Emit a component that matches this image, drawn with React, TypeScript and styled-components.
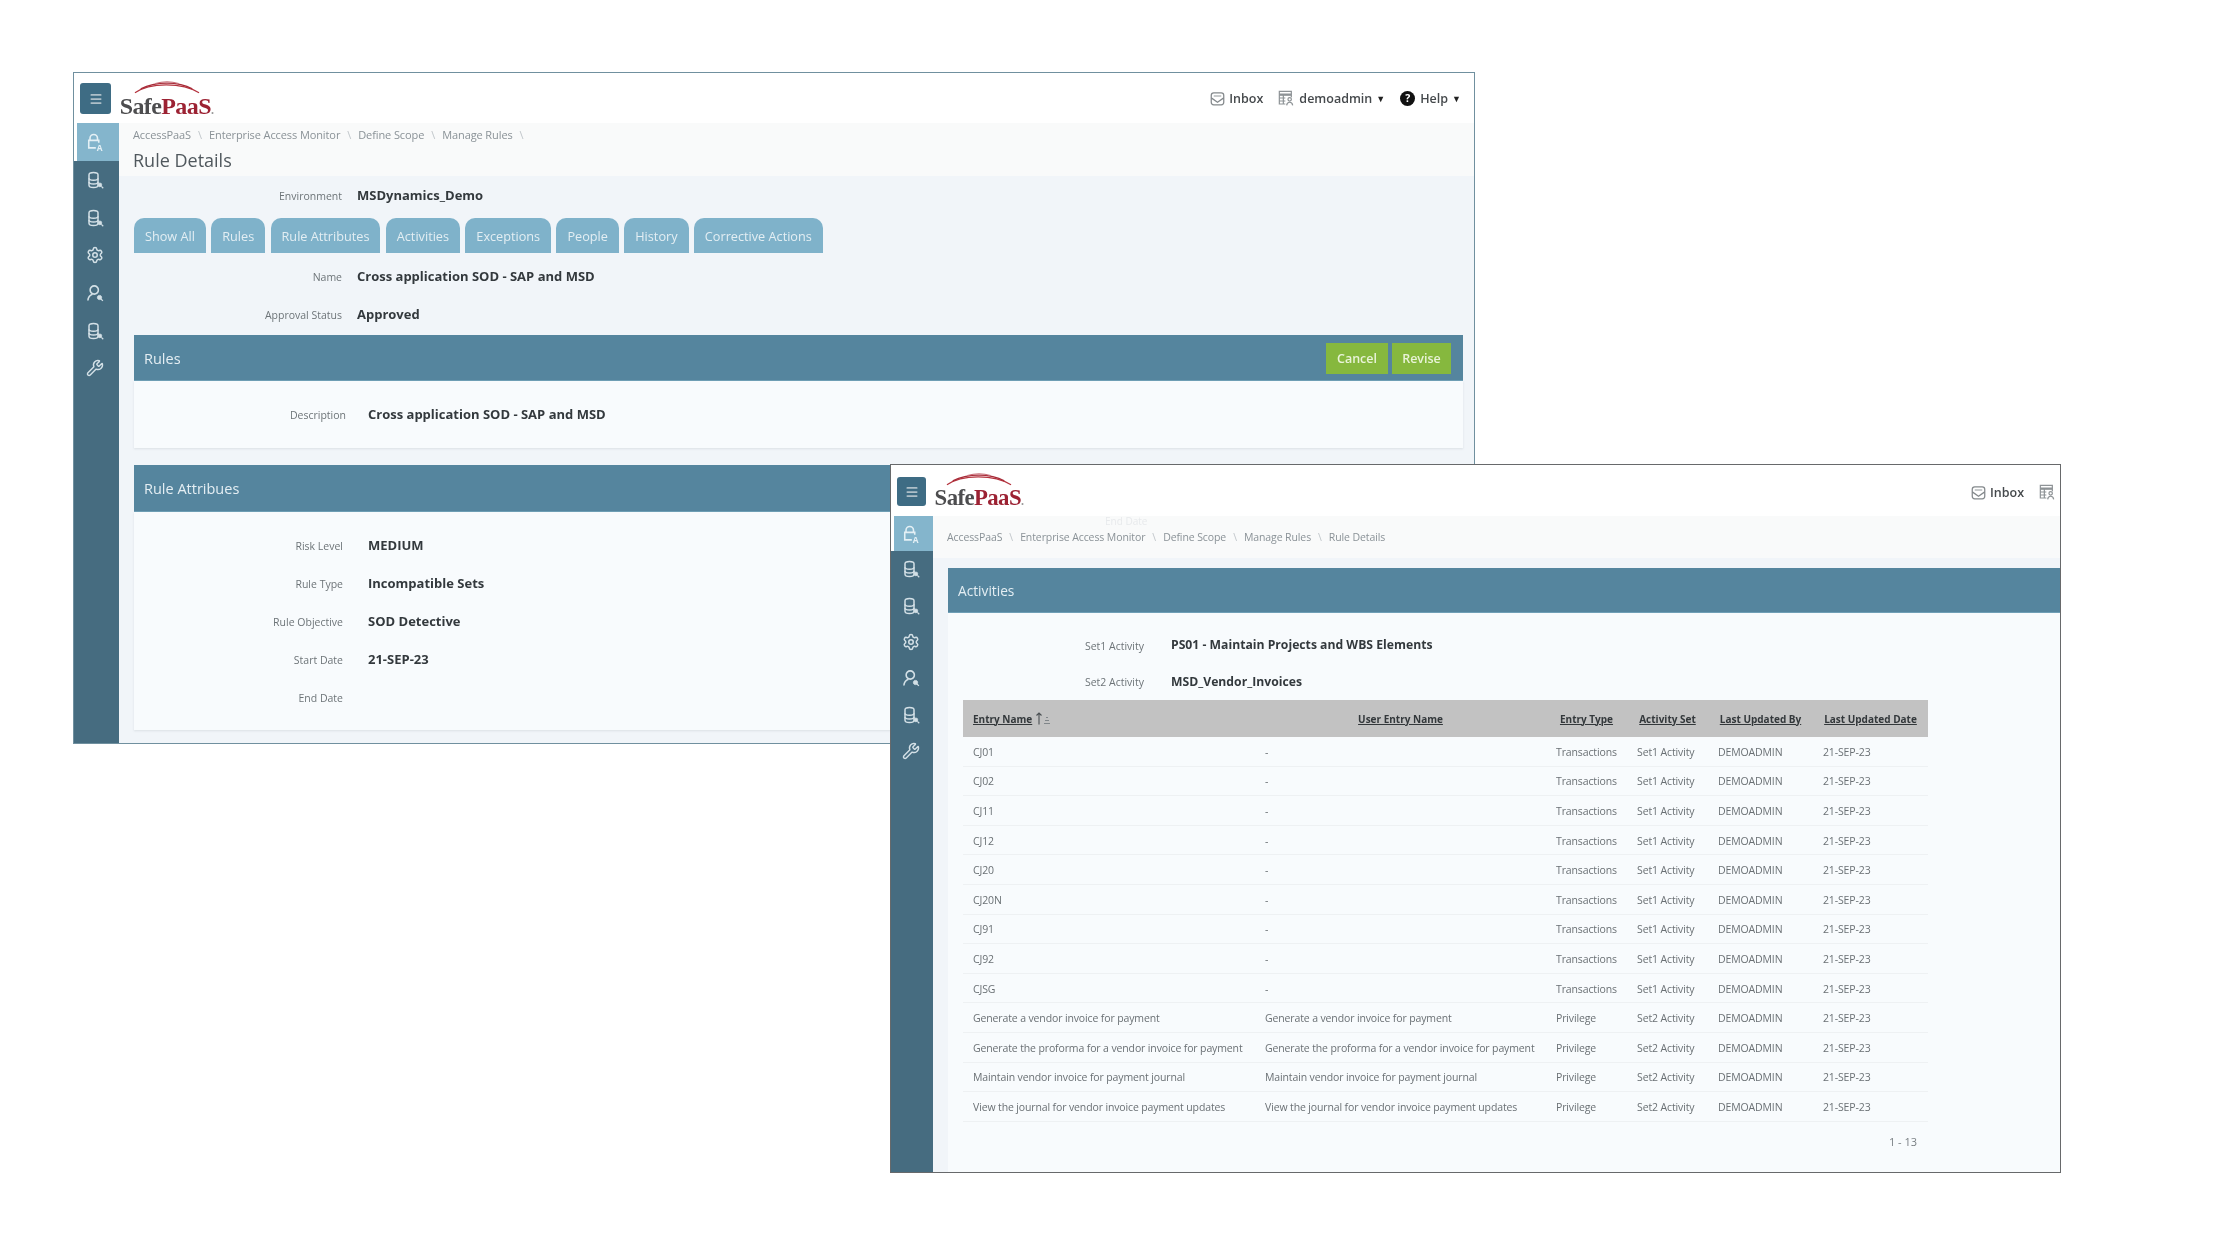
import React from 'react';
import styled, { createGlobalStyle } from 'styled-components';
import { Menu as MenuIcon, Settings, Wrench } from 'lucide-react';

const GlobalStyle = createGlobalStyle`
  html, body {
    margin: 0;
    background: #ffffff;
    font-family: 'Open Sans', 'Liberation Sans', sans-serif;
  }
`;

const tabs = ['Show All', 'Rules', 'Rule Attributes', 'Activities', 'Exceptions', 'People', 'History', 'Corrective Actions'];
const attributes = [
  ['Risk Level', 'MEDIUM'],
  ['Rule Type', 'Incompatible Sets'],
  ['Rule Objective', 'SOD Detective'],
  ['Start Date', '21-SEP-23'],
  ['End Date', ''],
];
const entries = [
  ['CJ01', '-', 'Transactions', 'Set1 Activity'],
  ['CJ02', '-', 'Transactions', 'Set1 Activity'],
  ['CJ11', '-', 'Transactions', 'Set1 Activity'],
  ['CJ12', '-', 'Transactions', 'Set1 Activity'],
  ['CJ20', '-', 'Transactions', 'Set1 Activity'],
  ['CJ20N', '-', 'Transactions', 'Set1 Activity'],
  ['CJ91', '-', 'Transactions', 'Set1 Activity'],
  ['CJ92', '-', 'Transactions', 'Set1 Activity'],
  ['CJSG', '-', 'Transactions', 'Set1 Activity'],
  ['Generate a vendor invoice for payment', 'Generate a vendor invoice for payment', 'Privilege', 'Set2 Activity'],
  ['Generate the proforma for a vendor invoice for payment', 'Generate the proforma for a vendor invoice for payment', 'Privilege', 'Set2 Activity'],
  ['Maintain vendor invoice for payment journal', 'Maintain vendor invoice for payment journal', 'Privilege', 'Set2 Activity'],
  ['View the journal for vendor invoice payment updates', 'View the journal for vendor invoice payment updates', 'Privilege', 'Set2 Activity'],
];

function DbSearchIcon() {
  return (
    <svg width="18" height="18" viewBox="0 0 24 24" fill="none" stroke="currentColor" strokeWidth="2">
      <path d="M4 5c0-1.700 2.500-3 6-3s6 1.300 6 3v14c0 1.700-2.500 3-6 3s-6-1.300-6-3z" />
      <path d="M4 9.500c0 1.500 2.500 2.700 6 2.700s6-1.200 6-2.700M4 14.500c0 1.500 2.500 2.700 6 2.700s6-1.200 6-2.700" />
      <circle cx="18.500" cy="18.500" r="2.500" fill="currentColor" strokeWidth="1" />
      <path d="M20.500 20.500l2.500 2.500" strokeWidth="1.600" />
    </svg>
  );
}

function LockAIcon() {
  return (
    <svg width="20" height="20" viewBox="0 0 24 24" fill="none" stroke="currentColor" strokeWidth="1.900">
      <path d="M6 10V7.500a4.500 4.500 0 0 1 9 0V10" />
      <path d="M13 19H4.500V10h12v3" />
      <text x="14" y="23" fontSize="10" fontWeight="700" fill="currentColor" stroke="none" fontFamily="Open Sans">A</text>
    </svg>
  );
}

function UserSearchIcon() {
  return (
    <svg width="18" height="18" viewBox="0 0 24 24" fill="none" stroke="currentColor" strokeWidth="2.100">
      <circle cx="11" cy="8" r="5.500" />
      <path d="M2.500 22c.4-4.400 2.900-7.400 6.200-8.400" />
      <circle cx="18" cy="18" r="2.800" fill="currentColor" strokeWidth="1.200" />
      <path d="M20 20l2.500 2.500" strokeWidth="1.600" />
    </svg>
  );
}

function InboxIcon() {
  return (
    <svg width="15" height="15" viewBox="0 0 24 24" fill="none" stroke="#84898c" strokeWidth="2">
      <rect x="2" y="3" width="20" height="19" rx="4" />
      <path d="M2 11l10 7 10-7" />
      <path d="M6 8h12" strokeWidth="1.400" />
    </svg>
  );
}

function TableUserIcon() {
  return (
    <svg width="16" height="16" viewBox="0 0 24 24" fill="none" stroke="#8e9396" strokeWidth="1.800">
      <path d="M11 21H2V2h18v9" />
      <path d="M2 7h18" strokeWidth="3.500" />
      <path d="M2 12h9M2 16.500h9M8 7v14" />
      <circle cx="17.500" cy="14" r="2.600" />
      <path d="M13 23c.3-3 2-4.600 4.500-4.600S21.700 20 22 23" />
    </svg>
  );
}

function SortIcon() {
  return (
    <svg width="16" height="13" viewBox="0 0 16 13" fill="none" stroke="#4a4f52" strokeWidth="1.100">
      <path d="M4 12.500V1M1.500 3.500L4 1l2.500 2.500" />
      <path d="M9 11.500h6M10 8.500h4M11 5.500h2" stroke="#80868a" />
    </svg>
  );
}

function Logo({ $width, $size }: { $width: number; $size: number }) {
  return (
    <LogoBox $width={$width}>
      <svg width="66" height="14" viewBox="0 0 68 14" fill="none" stroke="#b5343f">
        <path d="M1 13C16 2 50 2 67 13" strokeWidth="1.200" />
        <path d="M7 9C22 1 46 1 60 9" strokeWidth="1.500" stroke="#a72b38" />
        <path d="M22 3.500C30 1 38 1 46 3.500" strokeWidth="1.100" stroke="#c9707a" />
      </svg>
      <LogoText $size={$size}>
        Safe<LogoRed>PaaS</LogoRed><LogoDot>.</LogoDot>
      </LogoText>
    </LogoBox>
  );
}

function UserMenu({ $offset }: { $offset?: number }) {
  return (
    <Menu $offset={$offset}>
      <MenuItem $gap={4}>
        <InboxIcon />
        Inbox
      </MenuItem>
      <MenuItem $gap={5}>
        <TableUserIcon />
        demoadmin
        <Caret>▼</Caret>
      </MenuItem>
      <MenuItem $gap={5}>
        <HelpDot>?</HelpDot>
        Help
        <Caret>▼</Caret>
      </MenuItem>
    </Menu>
  );
}

function SideNav({ $width, $first, $item }: { $width: number; $first: number; $item: number }) {
  return (
    <Sidebar $width={$width}>
      <ActiveItem $height={$first}>
        <LockAIcon />
      </ActiveItem>
      <NavItem $height={$item}><DbSearchIcon /></NavItem>
      <NavItem $height={$item}><DbSearchIcon /></NavItem>
      <NavItem $height={$item}><Settings size={18} strokeWidth={2} /></NavItem>
      <NavItem $height={$item}><UserSearchIcon /></NavItem>
      <NavItem $height={$item}><DbSearchIcon /></NavItem>
      <NavItem $height={$item}><Wrench size={18} strokeWidth={1.900} /></NavItem>
    </Sidebar>
  );
}

export default function App(): React.ReactElement {
  return (
    <>
      <GlobalStyle />
      <Canvas>
        <Window $x={73} $y={72} $w={1402} $h={672} $border="#70909f">
          <Header $height={50}>
            <Hamburger $size={31} $top={3}><MenuIcon size={14} color="#aebfc8" strokeWidth={3} /></Hamburger>
            <Logo $width={93} $size={24} />
            <UserMenu />
          </Header>
          <Body>
            <SideNav $width={45} $first={38} $item={37.700} />
            <Main>
              <TitleBand $height={53} $top={3}>
                <Crumbs $size={11}>
                  <span>AccessPaaS</span><Sep>\</Sep>
                  <span>Enterprise Access Monitor</span><Sep>\</Sep>
                  <span>Define Scope</span><Sep>\</Sep>
                  <span>Manage Rules</span><Sep>\</Sep>
                </Crumbs>
                <PageTitle>Rule Details</PageTitle>
              </TitleBand>
              <Content>
                <FieldRow $height={40}>
                  <FieldLabel $width={208}>Environment</FieldLabel>
                  <FieldValue $gap={15} $size={13}>MSDynamics_Demo</FieldValue>
                </FieldRow>
                <TabBar>
                  {tabs.map((tab) => <Tab key={tab}>{tab}</Tab>)}
                </TabBar>
                <FieldRow $height={38} $top={5}>
                  <FieldLabel $width={208}>Name</FieldLabel>
                  <FieldValue $gap={15} $size={13}>Cross application SOD - SAP and MSD</FieldValue>
                </FieldRow>
                <FieldRow $height={38}>
                  <FieldLabel $width={208}>Approval Status</FieldLabel>
                  <FieldValue $gap={15} $size={13}>Approved</FieldValue>
                </FieldRow>
                <SectionBar $height={46} $top={1} $size={14.500}>
                  Rules
                  <BarActions>
                    <GreenButton $width={62}>Cancel</GreenButton>
                    <GreenButton $width={59}>Revise</GreenButton>
                  </BarActions>
                </SectionBar>
                <Card>
                  <FieldRow $height={38}>
                    <FieldLabel $width={212}>Description</FieldLabel>
                    <FieldValue $gap={22} $size={13}>Cross application SOD - SAP and MSD</FieldValue>
                  </FieldRow>
                </Card>
                <SectionBar $height={47} $top={17} $size={14.500}>Rule Attribues</SectionBar>
                <Card $bottom={13}>
                  {attributes.map(([label, value]) => (
                    <FieldRow key={label} $height={38}>
                      <FieldLabel $width={209}>{label}</FieldLabel>
                      <FieldValue $gap={25} $size={13}>{value}</FieldValue>
                    </FieldRow>
                  ))}
                </Card>
              </Content>
            </Main>
          </Body>
        </Window>

        <Window $x={890} $y={464} $w={1171} $h={709} $border="#67696b">
          <Header $height={51}>
            <Hamburger $size={29} $top={5}><MenuIcon size={14} color="#aebfc8" strokeWidth={3} /></Hamburger>
            <Logo $width={88} $size={22.800} />
            <UserMenu $offset={948} />
          </Header>
          <Body>
            <SideNav $width={42} $first={35} $item={36.400} />
            <Main>
              <TitleBand $height={42} $top={13}>
                <Crumbs $size={10.500}>
                  <span>AccessPaaS</span><Sep>\</Sep>
                  <span>Enterprise Access Monitor</span><Sep>\</Sep>
                  <span>Define Scope</span><Sep>\</Sep>
                  <span>Manage Rules</span><Sep>\</Sep>
                  <span>Rule Details</span>
                </Crumbs>
                <GhostLabel>End Date</GhostLabel>
              </TitleBand>
              <ActivitiesContent>
                <SectionBar $height={45} $top={10} $size={13.700}>Activities</SectionBar>
                <ActivitiesCard>
                  <FieldRow $height={37}>
                    <FieldLabel $width={196}>Set1 Activity</FieldLabel>
                    <FieldValue $gap={27} $size={12.200}>PS01 - Maintain Projects and WBS Elements</FieldValue>
                  </FieldRow>
                  <FieldRow $height={36}>
                    <FieldLabel $width={196}>Set2 Activity</FieldLabel>
                    <FieldValue $gap={27} $size={12.200}>MSD_Vendor_Invoices</FieldValue>
                  </FieldRow>
                  <EntryTable>
                    <HeadRow>
                      <HeadCell $align="left">
                        <HeadText>Entry Name</HeadText>
                        <SortIcon />
                      </HeadCell>
                      <HeadCell><HeadText>User Entry Name</HeadText></HeadCell>
                      <HeadCell><HeadText>Entry Type</HeadText></HeadCell>
                      <HeadCell><HeadText>Activity Set</HeadText></HeadCell>
                      <HeadCell><HeadText>Last Updated By</HeadText></HeadCell>
                      <HeadCell><HeadText>Last Updated Date</HeadText></HeadCell>
                    </HeadRow>
                    {entries.map(([name, user, type, set]) => (
                      <EntryRow key={name}>
                        <EntryCell>{name}</EntryCell>
                        <EntryCell>{user}</EntryCell>
                        <EntryCell>{type}</EntryCell>
                        <EntryCell>{set}</EntryCell>
                        <EntryCell>DEMOADMIN</EntryCell>
                        <EntryCell>21-SEP-23</EntryCell>
                      </EntryRow>
                    ))}
                    <Pager>1 - 13</Pager>
                  </EntryTable>
                </ActivitiesCard>
              </ActivitiesContent>
            </Main>
          </Body>
        </Window>
      </Canvas>
    </>
  );
}

const Canvas = styled.div`
  position: relative;
  width: 2240px;
  height: 1260px;
  overflow: hidden;
  background: #ffffff;
`;

const Window = styled.div<{ $x: number; $y: number; $w: number; $h: number; $border: string }>`
  position: absolute;
  left: ${(p) => p.$x}px;
  top: ${(p) => p.$y}px;
  width: ${(p) => p.$w}px;
  height: ${(p) => p.$h}px;
  box-sizing: border-box;
  display: flex;
  flex-direction: column;
  overflow: hidden;
  background: #ffffff;
  border: 1px solid ${(p) => p.$border};
  filter: blur(0.5px);
`;

const Header = styled.div<{ $height: number }>`
  flex: none;
  height: ${(p) => p.$height}px;
  box-sizing: border-box;
  display: flex;
  align-items: flex-start;
  padding: 7px 13px 0 6px;
  overflow: hidden;
`;

const Hamburger = styled.div<{ $size: number; $top: number }>`
  flex: none;
  width: ${(p) => p.$size}px;
  height: ${(p) => p.$size}px;
  margin-top: ${(p) => p.$top}px;
  display: flex;
  align-items: center;
  justify-content: center;
  background: #3e6c84;
  border-radius: 3px;
`;

const LogoBox = styled.div<{ $width: number }>`
  flex: none;
  width: ${(p) => p.$width}px;
  margin-left: 9px;
  display: flex;
  flex-direction: column;
  align-items: center;
`;

const LogoText = styled.div<{ $size: number }>`
  margin-top: 1px;
  font-family: 'Liberation Serif', serif;
  font-size: ${(p) => p.$size}px;
  font-weight: 700;
  line-height: 22px;
  letter-spacing: -0.6px;
  white-space: nowrap;
  color: #4d4d4f;
`;

const LogoRed = styled.span`
  color: #9c2233;
`;

const LogoDot = styled.span`
  font-size: 12px;
  color: #9a9a9a;
`;

const Menu = styled.div<{ $offset?: number }>`
  flex: none;
  display: flex;
  align-items: center;
  gap: 15px;
  height: 36px;
  margin-top: ${(p) => (p.$offset ? 2 : 0)}px;
  margin-left: ${(p) => (p.$offset ? `${p.$offset}px` : 'auto')};
  font-size: 12.500px;
  font-weight: 600;
  color: #45494c;
`;

const MenuItem = styled.div<{ $gap: number }>`
  display: flex;
  align-items: center;
  gap: ${(p) => p.$gap}px;
  white-space: nowrap;
`;

const Caret = styled.span`
  margin-left: -1px;
  font-size: 9px;
  color: #222222;
`;

const HelpDot = styled.span`
  width: 15px;
  height: 15px;
  border-radius: 50%;
  display: flex;
  align-items: center;
  justify-content: center;
  background: #111111;
  color: #ffffff;
  font-size: 10.500px;
  font-weight: 700;
`;

const Body = styled.div`
  flex: 1;
  min-height: 0;
  display: flex;
`;

const Sidebar = styled.nav<{ $width: number }>`
  flex: none;
  width: ${(p) => p.$width}px;
  display: flex;
  flex-direction: column;
  background: #466c80;
  color: #d3e0e6;
`;

const NavItem = styled.div<{ $height: number }>`
  height: ${(p) => p.$height}px;
  padding-right: 3px;
  display: flex;
  align-items: center;
  justify-content: center;
`;

const ActiveItem = styled.div<{ $height: number }>`
  flex: none;
  height: ${(p) => p.$height}px;
  margin-left: 3px;
  padding-right: 6px;
  box-shadow: -3px 0 0 #ffffff;
  display: flex;
  align-items: center;
  justify-content: center;
  background: #84b5cc;
  color: #e4f0f5;
`;

const Main = styled.main`
  flex: 1;
  min-width: 0;
  display: flex;
  flex-direction: column;
  background: #f1f5f9;
`;

const TitleBand = styled.div<{ $height: number; $top: number }>`
  position: relative;
  flex: none;
  height: ${(p) => p.$height}px;
  box-sizing: border-box;
  padding: ${(p) => p.$top}px 14px 0;
  background: #f9fafa;
`;

const Crumbs = styled.div<{ $size: number }>`
  display: flex;
  align-items: center;
  gap: 7px;
  height: 16px;
  font-size: ${(p) => p.$size}px;
  letter-spacing: -0.1px;
  color: #8a9297;
`;

const Sep = styled.span`
  color: #c0c6ca;
`;

const GhostLabel = styled.span`
  position: absolute;
  left: 172px;
  top: -2px;
  font-size: 10px;
  color: #e8eaec;
`;

const PageTitle = styled.h1`
  margin: 6px 0 0;
  font-size: 18px;
  font-weight: 400;
  line-height: 24px;
  color: #50585d;
`;

const Content = styled.div`
  flex: 1;
  padding: 0 11px 0 15px;
`;

const FieldRow = styled.div<{ $height: number; $top?: number }>`
  height: ${(p) => p.$height}px;
  margin-top: ${(p) => p.$top ?? 0}px;
  display: flex;
  align-items: center;
`;

const FieldLabel = styled.span<{ $width: number }>`
  flex: none;
  width: ${(p) => p.$width}px;
  text-align: right;
  font-size: 10.500px;
  color: #6d7478;
`;

const FieldValue = styled.span<{ $gap: number; $size: number }>`
  margin-left: ${(p) => p.$gap}px;
  padding-bottom: 2px;
  font-size: ${(p) => p.$size}px;
  font-weight: 700;
  color: #33393d;
  white-space: nowrap;
`;

const TabBar = styled.div`
  height: 35px;
  margin-top: 2px;
  display: flex;
  gap: 5.300px;
`;

const Tab = styled.div`
  display: flex;
  align-items: center;
  padding: 1px 11px 0;
  background: #7fb2ca;
  border-radius: 10px 10px 0 0;
  font-size: 12.700px;
  color: #e3eef3;
  white-space: nowrap;
`;

const SectionBar = styled.div<{ $height: number; $top: number; $size: number }>`
  height: ${(p) => p.$height}px;
  margin-top: ${(p) => p.$top}px;
  box-sizing: border-box;
  display: flex;
  align-items: center;
  justify-content: space-between;
  padding: 1px 12px 0 10px;
  background: #55859e;
  border-bottom: 1px solid #6f9fb6;
  font-size: ${(p) => p.$size}px;
  color: #e4eef3;
`;

const BarActions = styled.div`
  display: flex;
  gap: 4px;
`;

const GreenButton = styled.button<{ $width: number }>`
  width: ${(p) => p.$width}px;
  height: 31px;
  padding: 0;
  border: 0;
  background: #86b83e;
  color: #e9f3d8;
  font-family: inherit;
  font-size: 12.500px;
  font-weight: 600;
`;

const Card = styled.div<{ $bottom?: number }>`
  box-sizing: border-box;
  padding: 15px 0 ${(p) => p.$bottom ?? 14}px;
  background: #f8fbfd;
  box-shadow: 0 1px 2px rgba(120, 135, 145, 0.18);
`;

const ActivitiesContent = styled.div`
  flex: 1;
  display: flex;
  flex-direction: column;
  padding-left: 15px;
`;

const ActivitiesCard = styled.div`
  flex: 1;
  padding-top: 14px;
  background: #f8fbfd;
`;

const EntryTable = styled.div`
  width: 965px;
  margin-left: 15px;
`;

const HeadRow = styled.div`
  height: 37px;
  display: grid;
  grid-template-columns: 292px 291px 81px 81px 105px 115px;
  align-items: center;
  background: #c2c2c2;
`;

const HeadCell = styled.div<{ $align?: string }>`
  display: flex;
  align-items: center;
  gap: 3px;
  justify-content: ${(p) => (p.$align === 'left' ? 'flex-start' : 'center')};
  padding-left: ${(p) => (p.$align === 'left' ? '10px' : '0')};
`;

const HeadText = styled.span`
  font-size: 10px;
  font-weight: 700;
  color: #33383b;
  text-decoration: underline;
  white-space: nowrap;
`;

const EntryRow = styled.div`
  height: 29.600px;
  box-sizing: border-box;
  display: grid;
  grid-template-columns: 292px 291px 81px 81px 105px 115px;
  align-items: center;
  padding-top: 1px;
  border-bottom: 1px solid #eef1f3;
`;

const EntryCell = styled.div`
  padding-left: 10px;
  font-size: 10.500px;
  color: #6a7074;
  letter-spacing: -0.13px;
  white-space: nowrap;
`;

const Pager = styled.div`
  margin-top: 12px;
  padding-right: 11px;
  text-align: right;
  font-size: 11px;
  color: #787e82;
`;
